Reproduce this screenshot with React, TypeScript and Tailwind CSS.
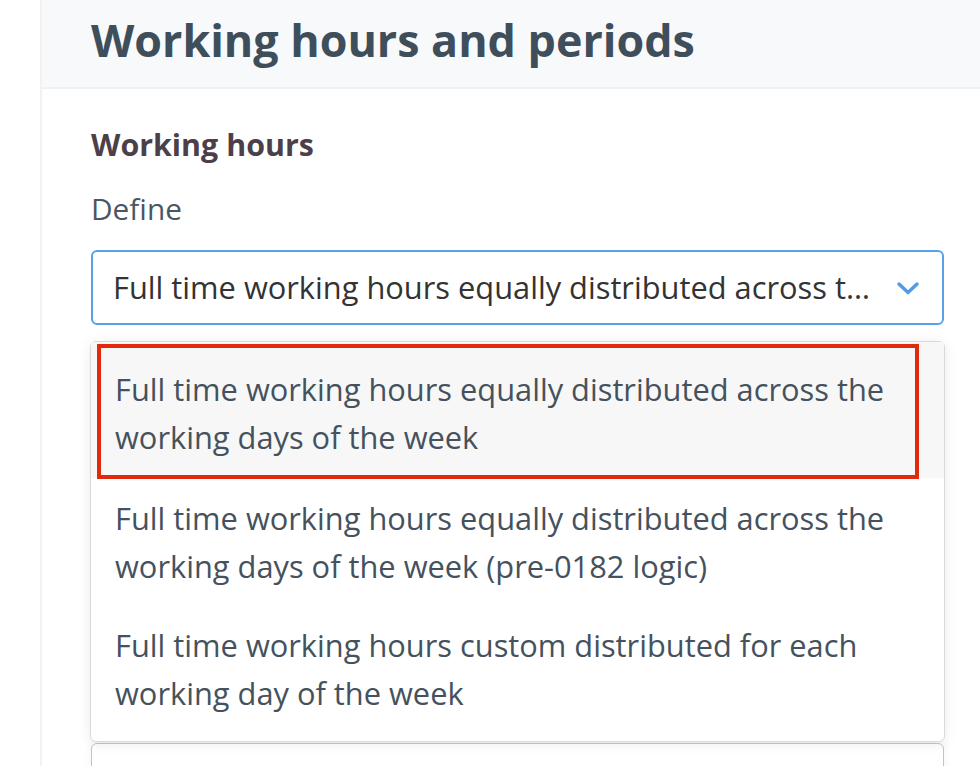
import * as React from 'react';

const options = [
  'Full time working hours equally distributed across the working days of the week',
  'Full time working hours equally distributed across the working days of the week (pre-0182 logic)',
  'Full time working hours custom distributed for each working day of the week',
];

// 下拉箭头
function Chevron() {
  return (
    <svg width="24" height="16" viewBox="0 0 24 16" fill="none">
      <path d="M3 4l9 8.5L21 4" stroke="#4f9be6" strokeWidth="3.4" strokeLinecap="round" strokeLinejoin="round" />
    </svg>
  );
}

export default function App() {
  return (
    <div
      className="flex h-[766px] w-[980px] overflow-hidden bg-white"
      style={{ fontFamily: '"Open Sans", "Noto Sans", sans-serif' }}
    >
      <div className="w-[40px] shrink-0" />
      <div className="flex min-w-0 flex-1 flex-col border-l-2 border-[#f1f2f3]">
        {/* 页头 */}
        <header className="flex h-[89px] shrink-0 items-center border-b-2 border-[#f0f1f2] bg-[#f8f9fb] pl-[49px]">
          <h1 className="-mt-[6px] text-[44.8px] font-bold leading-none text-[#3e4e5b]">Working hours and periods</h1>
        </header>

        <div className="flex min-w-0 flex-col pl-[49px] pr-[36px]">
          <h2 className="mt-[37px] text-[30.4px] font-bold leading-[38px] text-[#4d3f4a]">Working hours</h2>
          <div className="mt-[26px] text-[29.8px] leading-[38px] text-[#4a5663]">Define</div>

          {/* 选择框 */}
          <div className="mt-[22px] flex h-[75px] items-center rounded-md border-2 border-[#5ba1ea] pl-[20px] pr-[22px]">
            <span className="min-w-0 flex-1 truncate text-[30.8px] text-[#333333]">
              Full time working hours equally distributed across the working days of the week
            </span>
            <span className="ml-[14px] shrink-0">
              <Chevron />
            </span>
          </div>

          {/* 下拉选项 */}
          <div className="relative -mx-px mt-[16px] rounded-md border border-[#d9d9d9] bg-white shadow-[0_2px_14px_rgba(0,0,0,0.08)]">
            {options.map((label, i) => (
              <div
                key={label}
                className={
                  i === 0
                    ? 'bg-[#f7f7f7] pb-[17px] pl-[24px] pr-[30px] pt-[23px] text-[30.8px] leading-[48px] text-[#45525d]'
                    : i === 1
                      ? 'pb-[15px] pl-[24px] pr-[30px] pt-[16px] text-[30.8px] leading-[48px] text-[#45525d]'
                      : 'pb-[24px] pl-[24px] pr-[30px] pt-[16px] text-[30.8px] leading-[48px] text-[#45525d]'
                }
              >
                {label}
              </div>
            ))}
            {/* 标注框 */}
            <div className="pointer-events-none absolute left-[6px] right-[25px] top-[2px] h-[135px] border-[4px] border-[#e2290b]" />
          </div>

          <div className="mt-px h-[40px] rounded-md border border-[#c4c4c4] shadow-[0_-2px_10px_rgba(0,0,0,0.05)]" />
        </div>
      </div>
    </div>
  );
}
